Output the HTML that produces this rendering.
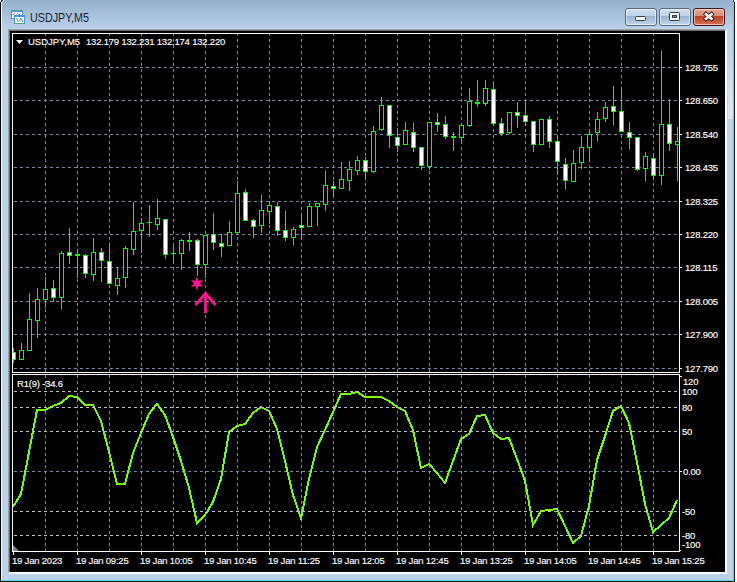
<!DOCTYPE html>
<html><head><meta charset="utf-8"><style>
html,body{margin:0;padding:0;background:#ffffff;width:737px;height:582px;overflow:hidden}
svg text{font-family:"Liberation Sans",sans-serif}
</style></head><body>
<svg width="737" height="582" viewBox="0 0 737 582" style="position:absolute;left:0;top:0">
<defs>
<linearGradient id="tg" x1="0" y1="0" x2="0" y2="1">
<stop offset="0" stop-color="#95afcc"/><stop offset="1" stop-color="#bad2ea"/></linearGradient>
<linearGradient id="bt" x1="0" y1="0" x2="0" y2="1">
<stop offset="0" stop-color="#d3e1ef"/><stop offset="0.45" stop-color="#bcd0e6"/><stop offset="0.46" stop-color="#97b3d0"/><stop offset="1" stop-color="#c3d7ec"/></linearGradient>
<linearGradient id="ct" x1="0" y1="0" x2="0" y2="1">
<stop offset="0" stop-color="#e8a898"/><stop offset="0.45" stop-color="#dc8a74"/><stop offset="0.46" stop-color="#c03f22"/><stop offset="1" stop-color="#d8765c"/></linearGradient>
<linearGradient id="hl" x1="0" y1="0" x2="0" y2="1"><stop offset="0" stop-color="#ffffff" stop-opacity="0"/><stop offset="1" stop-color="#ffffff" stop-opacity="0.5"/></linearGradient>
<clipPath id="mainclip"><rect x="13" y="34" width="666" height="338"/></clipPath>
<clipPath id="indclip"><rect x="13" y="375" width="666" height="176"/></clipPath>
</defs>
<g shape-rendering="crispEdges">
<rect x="0" y="0" width="735" height="582" fill="#bad2ea"/>
<rect x="0" y="0" width="735" height="29" fill="url(#tg)"/>
<rect x="0" y="0" width="1" height="582" fill="#000000"/>
<rect x="1" y="0" width="1" height="581" fill="#f8fbff"/>
<rect x="734" y="0" width="1" height="582" fill="#1a1a1a"/>
<rect x="733" y="0" width="1" height="581" fill="#48d6fa"/>
<rect x="0" y="581" width="735" height="1" fill="#1a1a1a"/>
<rect x="1" y="580" width="733" height="1" fill="#48d6fa"/>
<rect x="0" y="0" width="1" height="2" fill="#e8eef4"/>
<rect x="1" y="0" width="1" height="2" fill="#202020"/>
<rect x="2" y="0" width="1" height="1" fill="#303030"/>
<rect x="3" y="0" width="1" height="1" fill="#f0f4f8"/>
<rect x="2" y="1" width="1" height="1" fill="#f0f4f8"/>
<rect x="734" y="0" width="1" height="2" fill="#e8eef4"/>
<rect x="733" y="0" width="1" height="2" fill="#103030"/>
<rect x="732" y="0" width="1" height="1" fill="#c8f0ff"/>
<rect x="8" y="29" width="719" height="545" fill="#ffffff"/>
<rect x="8" y="29" width="718" height="1" fill="#a0a0a0"/>
<rect x="8" y="29" width="1" height="544" fill="#a0a0a0"/>
<rect x="9" y="30" width="716" height="1" fill="#696969"/>
<rect x="9" y="30" width="1" height="542" fill="#696969"/>
<rect x="10" y="31" width="715" height="541" fill="#000000"/>
<rect x="728" y="45" width="5" height="74" fill="url(#hl)"/>
<rect x="12" y="33" width="668" height="1" fill="#ffffff"/>
<rect x="12" y="372" width="668" height="1" fill="#ffffff"/>
<rect x="12" y="33" width="1" height="340" fill="#ffffff"/>
<rect x="679" y="33" width="1" height="340" fill="#ffffff"/>
<rect x="12" y="374" width="668" height="1" fill="#ffffff"/>
<rect x="12" y="551" width="668" height="1" fill="#ffffff"/>
<rect x="12" y="374" width="1" height="178" fill="#ffffff"/>
<rect x="679" y="374" width="1" height="178" fill="#ffffff"/>
<path d="M13,67.5H679M13,100.5H679M13,134.5H679M13,167.5H679M13,201.5H679M13,234.5H679M13,267.5H679M13,301.5H679M13,334.5H679M13,368.5H679M13,471.5H679" stroke="#778899" stroke-width="1" stroke-dasharray="3 3" stroke-dashoffset="5" fill="none"/>
<path d="M45.5,34V372M77.5,34V372M109.5,34V372M141.5,34V372M173.5,34V372M205.5,34V372M237.5,34V372M269.5,34V372M301.5,34V372M333.5,34V372M365.5,34V372M397.5,34V372M429.5,34V372M461.5,34V372M493.5,34V372M525.5,34V372M557.5,34V372M589.5,34V372M621.5,34V372M653.5,34V372" stroke="#778899" stroke-width="1" stroke-dasharray="3 3" stroke-dashoffset="1" fill="none"/>
<path d="M45.5,375V551M77.5,375V551M109.5,375V551M141.5,375V551M173.5,375V551M205.5,375V551M237.5,375V551M269.5,375V551M301.5,375V551M333.5,375V551M365.5,375V551M397.5,375V551M429.5,375V551M461.5,375V551M493.5,375V551M525.5,375V551M557.5,375V551M589.5,375V551M621.5,375V551M653.5,375V551" stroke="#778899" stroke-width="1" stroke-dasharray="3 3" stroke-dashoffset="0" fill="none"/>
<rect x="680" y="67" width="2" height="1" fill="#ffffff"/>
<rect x="680" y="100" width="2" height="1" fill="#ffffff"/>
<rect x="680" y="134" width="2" height="1" fill="#ffffff"/>
<rect x="680" y="167" width="2" height="1" fill="#ffffff"/>
<rect x="680" y="201" width="2" height="1" fill="#ffffff"/>
<rect x="680" y="234" width="2" height="1" fill="#ffffff"/>
<rect x="680" y="267" width="2" height="1" fill="#ffffff"/>
<rect x="680" y="301" width="2" height="1" fill="#ffffff"/>
<rect x="680" y="334" width="2" height="1" fill="#ffffff"/>
<rect x="680" y="368" width="2" height="1" fill="#ffffff"/>
<rect x="680" y="376" width="2" height="1" fill="#ffffff"/>
<rect x="680" y="471" width="2" height="1" fill="#ffffff"/>
<rect x="680" y="550" width="1" height="1" fill="#ffffff"/>
<rect x="13" y="552" width="1" height="3" fill="#ffffff"/>
<rect x="77" y="552" width="1" height="3" fill="#ffffff"/>
<rect x="141" y="552" width="1" height="3" fill="#ffffff"/>
<rect x="205" y="552" width="1" height="3" fill="#ffffff"/>
<rect x="269" y="552" width="1" height="3" fill="#ffffff"/>
<rect x="333" y="552" width="1" height="3" fill="#ffffff"/>
<rect x="397" y="552" width="1" height="3" fill="#ffffff"/>
<rect x="461" y="552" width="1" height="3" fill="#ffffff"/>
<rect x="525" y="552" width="1" height="3" fill="#ffffff"/>
<rect x="589" y="552" width="1" height="3" fill="#ffffff"/>
<rect x="653" y="552" width="1" height="3" fill="#ffffff"/>
<g clip-path="url(#mainclip)"><rect x="13" y="348" width="1" height="15" fill="#00ff00"/><rect x="11" y="352" width="5" height="8" fill="#00ff00"/><rect x="12" y="353" width="3" height="6" fill="#ffffff"/><rect x="21" y="343" width="1" height="17" fill="#00ff00"/><rect x="19" y="350" width="5" height="10" fill="#00ff00"/><rect x="20" y="351" width="3" height="8" fill="#000000"/><rect x="29" y="293" width="1" height="58" fill="#00ff00"/><rect x="27" y="319" width="5" height="32" fill="#00ff00"/><rect x="28" y="320" width="3" height="30" fill="#000000"/><rect x="37" y="288" width="1" height="50" fill="#00ff00"/><rect x="35" y="299" width="5" height="22" fill="#00ff00"/><rect x="36" y="300" width="3" height="20" fill="#000000"/><rect x="45" y="277" width="1" height="31" fill="#00ff00"/><rect x="43" y="289" width="5" height="11" fill="#00ff00"/><rect x="44" y="290" width="3" height="9" fill="#000000"/><rect x="53" y="280" width="1" height="22" fill="#00ff00"/><rect x="51" y="288" width="5" height="10" fill="#00ff00"/><rect x="52" y="289" width="3" height="8" fill="#ffffff"/><rect x="61" y="251" width="1" height="58" fill="#00ff00"/><rect x="59" y="253" width="5" height="45" fill="#00ff00"/><rect x="60" y="254" width="3" height="43" fill="#000000"/><rect x="69" y="228" width="1" height="36" fill="#00ff00"/><rect x="67" y="252" width="5" height="4" fill="#00ff00"/><rect x="68" y="253" width="3" height="2" fill="#ffffff"/><rect x="77" y="249" width="1" height="29" fill="#00ff00"/><rect x="75" y="254" width="5" height="2" fill="#00ff00"/><rect x="85" y="254" width="1" height="24" fill="#00ff00"/><rect x="83" y="255" width="5" height="19" fill="#00ff00"/><rect x="84" y="256" width="3" height="17" fill="#ffffff"/><rect x="93" y="238" width="1" height="43" fill="#00ff00"/><rect x="91" y="252" width="5" height="23" fill="#00ff00"/><rect x="92" y="253" width="3" height="21" fill="#000000"/><rect x="101" y="248" width="1" height="34" fill="#00ff00"/><rect x="99" y="252" width="5" height="9" fill="#00ff00"/><rect x="100" y="253" width="3" height="7" fill="#ffffff"/><rect x="109" y="243" width="1" height="41" fill="#00ff00"/><rect x="107" y="261" width="5" height="23" fill="#00ff00"/><rect x="108" y="262" width="3" height="21" fill="#ffffff"/><rect x="117" y="267" width="1" height="28" fill="#00ff00"/><rect x="115" y="278" width="5" height="8" fill="#00ff00"/><rect x="116" y="279" width="3" height="6" fill="#000000"/><rect x="125" y="246" width="1" height="42" fill="#00ff00"/><rect x="123" y="248" width="5" height="30" fill="#00ff00"/><rect x="124" y="249" width="3" height="28" fill="#000000"/><rect x="133" y="202" width="1" height="53" fill="#00ff00"/><rect x="131" y="231" width="5" height="19" fill="#00ff00"/><rect x="132" y="232" width="3" height="17" fill="#000000"/><rect x="141" y="218" width="1" height="35" fill="#00ff00"/><rect x="139" y="223" width="5" height="8" fill="#00ff00"/><rect x="140" y="224" width="3" height="6" fill="#000000"/><rect x="149" y="205" width="1" height="32" fill="#00ff00"/><rect x="147" y="222" width="5" height="1" fill="#00ff00"/><rect x="157" y="199" width="1" height="31" fill="#00ff00"/><rect x="155" y="218" width="5" height="7" fill="#00ff00"/><rect x="156" y="219" width="3" height="5" fill="#000000"/><rect x="165" y="219" width="1" height="40" fill="#00ff00"/><rect x="163" y="219" width="5" height="36" fill="#00ff00"/><rect x="164" y="220" width="3" height="34" fill="#ffffff"/><rect x="173" y="246" width="1" height="16" fill="#00ff00"/><rect x="171" y="253" width="5" height="1" fill="#00ff00"/><rect x="181" y="239" width="1" height="31" fill="#00ff00"/><rect x="179" y="240" width="5" height="14" fill="#00ff00"/><rect x="180" y="241" width="3" height="12" fill="#000000"/><rect x="189" y="232" width="1" height="19" fill="#00ff00"/><rect x="187" y="240" width="5" height="2" fill="#00ff00"/><rect x="197" y="239" width="1" height="37" fill="#00ff00"/><rect x="195" y="240" width="5" height="25" fill="#00ff00"/><rect x="196" y="241" width="3" height="23" fill="#ffffff"/><rect x="205" y="235" width="1" height="43" fill="#00ff00"/><rect x="203" y="235" width="5" height="30" fill="#00ff00"/><rect x="204" y="236" width="3" height="28" fill="#000000"/><rect x="213" y="213" width="1" height="37" fill="#00ff00"/><rect x="211" y="234" width="5" height="9" fill="#00ff00"/><rect x="212" y="235" width="3" height="7" fill="#ffffff"/><rect x="221" y="234" width="1" height="23" fill="#00ff00"/><rect x="219" y="243" width="5" height="4" fill="#00ff00"/><rect x="220" y="244" width="3" height="2" fill="#ffffff"/><rect x="229" y="221" width="1" height="25" fill="#00ff00"/><rect x="227" y="232" width="5" height="14" fill="#00ff00"/><rect x="228" y="233" width="3" height="12" fill="#000000"/><rect x="237" y="181" width="1" height="53" fill="#00ff00"/><rect x="235" y="193" width="5" height="40" fill="#00ff00"/><rect x="236" y="194" width="3" height="38" fill="#000000"/><rect x="245" y="189" width="1" height="32" fill="#00ff00"/><rect x="243" y="192" width="5" height="29" fill="#00ff00"/><rect x="244" y="193" width="3" height="27" fill="#ffffff"/><rect x="253" y="219" width="1" height="19" fill="#00ff00"/><rect x="251" y="220" width="5" height="7" fill="#00ff00"/><rect x="252" y="221" width="3" height="5" fill="#ffffff"/><rect x="261" y="195" width="1" height="38" fill="#00ff00"/><rect x="259" y="210" width="5" height="16" fill="#00ff00"/><rect x="260" y="211" width="3" height="14" fill="#000000"/><rect x="269" y="201" width="1" height="23" fill="#00ff00"/><rect x="267" y="205" width="5" height="7" fill="#00ff00"/><rect x="268" y="206" width="3" height="5" fill="#000000"/><rect x="277" y="202" width="1" height="34" fill="#00ff00"/><rect x="275" y="206" width="5" height="25" fill="#00ff00"/><rect x="276" y="207" width="3" height="23" fill="#ffffff"/><rect x="285" y="211" width="1" height="30" fill="#00ff00"/><rect x="283" y="230" width="5" height="8" fill="#00ff00"/><rect x="284" y="231" width="3" height="6" fill="#ffffff"/><rect x="293" y="227" width="1" height="18" fill="#00ff00"/><rect x="291" y="229" width="5" height="9" fill="#00ff00"/><rect x="292" y="230" width="3" height="7" fill="#000000"/><rect x="301" y="213" width="1" height="26" fill="#00ff00"/><rect x="299" y="225" width="5" height="3" fill="#00ff00"/><rect x="300" y="226" width="3" height="1" fill="#ffffff"/><rect x="309" y="203" width="1" height="24" fill="#00ff00"/><rect x="307" y="206" width="5" height="21" fill="#00ff00"/><rect x="308" y="207" width="3" height="19" fill="#000000"/><rect x="317" y="203" width="1" height="23" fill="#00ff00"/><rect x="315" y="203" width="5" height="4" fill="#00ff00"/><rect x="316" y="204" width="3" height="2" fill="#000000"/><rect x="325" y="171" width="1" height="40" fill="#00ff00"/><rect x="323" y="185" width="5" height="20" fill="#00ff00"/><rect x="324" y="186" width="3" height="18" fill="#000000"/><rect x="333" y="181" width="1" height="16" fill="#00ff00"/><rect x="331" y="186" width="5" height="3" fill="#00ff00"/><rect x="332" y="187" width="3" height="1" fill="#ffffff"/><rect x="341" y="162" width="1" height="27" fill="#00ff00"/><rect x="339" y="179" width="5" height="10" fill="#00ff00"/><rect x="340" y="180" width="3" height="8" fill="#000000"/><rect x="349" y="161" width="1" height="30" fill="#00ff00"/><rect x="347" y="169" width="5" height="12" fill="#00ff00"/><rect x="348" y="170" width="3" height="10" fill="#000000"/><rect x="357" y="156" width="1" height="19" fill="#00ff00"/><rect x="355" y="160" width="5" height="11" fill="#00ff00"/><rect x="356" y="161" width="3" height="9" fill="#000000"/><rect x="365" y="157" width="1" height="23" fill="#00ff00"/><rect x="363" y="160" width="5" height="12" fill="#00ff00"/><rect x="364" y="161" width="3" height="10" fill="#ffffff"/><rect x="373" y="126" width="1" height="47" fill="#00ff00"/><rect x="371" y="131" width="5" height="41" fill="#00ff00"/><rect x="372" y="132" width="3" height="39" fill="#000000"/><rect x="381" y="97" width="1" height="34" fill="#00ff00"/><rect x="379" y="105" width="5" height="25" fill="#00ff00"/><rect x="380" y="106" width="3" height="23" fill="#000000"/><rect x="389" y="105" width="1" height="43" fill="#00ff00"/><rect x="387" y="105" width="5" height="31" fill="#00ff00"/><rect x="388" y="106" width="3" height="29" fill="#ffffff"/><rect x="397" y="128" width="1" height="24" fill="#00ff00"/><rect x="395" y="137" width="5" height="9" fill="#00ff00"/><rect x="396" y="138" width="3" height="7" fill="#ffffff"/><rect x="405" y="122" width="1" height="23" fill="#00ff00"/><rect x="403" y="130" width="5" height="15" fill="#00ff00"/><rect x="404" y="131" width="3" height="13" fill="#000000"/><rect x="413" y="123" width="1" height="29" fill="#00ff00"/><rect x="411" y="132" width="5" height="16" fill="#00ff00"/><rect x="412" y="133" width="3" height="14" fill="#ffffff"/><rect x="421" y="147" width="1" height="23" fill="#00ff00"/><rect x="419" y="147" width="5" height="19" fill="#00ff00"/><rect x="420" y="148" width="3" height="17" fill="#ffffff"/><rect x="429" y="122" width="1" height="48" fill="#00ff00"/><rect x="427" y="122" width="5" height="45" fill="#00ff00"/><rect x="428" y="123" width="3" height="43" fill="#000000"/><rect x="437" y="113" width="1" height="19" fill="#00ff00"/><rect x="435" y="122" width="5" height="3" fill="#00ff00"/><rect x="436" y="123" width="3" height="1" fill="#ffffff"/><rect x="445" y="116" width="1" height="23" fill="#00ff00"/><rect x="443" y="124" width="5" height="13" fill="#00ff00"/><rect x="444" y="125" width="3" height="11" fill="#ffffff"/><rect x="453" y="132" width="1" height="19" fill="#00ff00"/><rect x="451" y="136" width="5" height="2" fill="#00ff00"/><rect x="461" y="124" width="1" height="17" fill="#00ff00"/><rect x="459" y="125" width="5" height="13" fill="#00ff00"/><rect x="460" y="126" width="3" height="11" fill="#000000"/><rect x="469" y="88" width="1" height="39" fill="#00ff00"/><rect x="467" y="101" width="5" height="25" fill="#00ff00"/><rect x="468" y="102" width="3" height="23" fill="#000000"/><rect x="477" y="80" width="1" height="27" fill="#00ff00"/><rect x="475" y="102" width="5" height="2" fill="#00ff00"/><rect x="485" y="80" width="1" height="26" fill="#00ff00"/><rect x="483" y="88" width="5" height="16" fill="#00ff00"/><rect x="484" y="89" width="3" height="14" fill="#000000"/><rect x="493" y="83" width="1" height="43" fill="#00ff00"/><rect x="491" y="89" width="5" height="35" fill="#00ff00"/><rect x="492" y="90" width="3" height="33" fill="#ffffff"/><rect x="501" y="118" width="1" height="18" fill="#00ff00"/><rect x="499" y="123" width="5" height="11" fill="#00ff00"/><rect x="500" y="124" width="3" height="9" fill="#ffffff"/><rect x="509" y="112" width="1" height="22" fill="#00ff00"/><rect x="507" y="112" width="5" height="21" fill="#00ff00"/><rect x="508" y="113" width="3" height="19" fill="#000000"/><rect x="517" y="102" width="1" height="26" fill="#00ff00"/><rect x="515" y="112" width="5" height="4" fill="#00ff00"/><rect x="516" y="113" width="3" height="2" fill="#ffffff"/><rect x="525" y="100" width="1" height="26" fill="#00ff00"/><rect x="523" y="115" width="5" height="7" fill="#00ff00"/><rect x="524" y="116" width="3" height="5" fill="#ffffff"/><rect x="533" y="121" width="1" height="31" fill="#00ff00"/><rect x="531" y="121" width="5" height="24" fill="#00ff00"/><rect x="532" y="122" width="3" height="22" fill="#ffffff"/><rect x="541" y="119" width="1" height="26" fill="#00ff00"/><rect x="539" y="119" width="5" height="26" fill="#00ff00"/><rect x="540" y="120" width="3" height="24" fill="#000000"/><rect x="549" y="116" width="1" height="32" fill="#00ff00"/><rect x="547" y="119" width="5" height="23" fill="#00ff00"/><rect x="548" y="120" width="3" height="21" fill="#ffffff"/><rect x="557" y="137" width="1" height="38" fill="#00ff00"/><rect x="555" y="141" width="5" height="21" fill="#00ff00"/><rect x="556" y="142" width="3" height="19" fill="#ffffff"/><rect x="565" y="158" width="1" height="31" fill="#00ff00"/><rect x="563" y="164" width="5" height="17" fill="#00ff00"/><rect x="564" y="165" width="3" height="15" fill="#ffffff"/><rect x="573" y="150" width="1" height="32" fill="#00ff00"/><rect x="571" y="163" width="5" height="19" fill="#00ff00"/><rect x="572" y="164" width="3" height="17" fill="#000000"/><rect x="581" y="136" width="1" height="33" fill="#00ff00"/><rect x="579" y="147" width="5" height="16" fill="#00ff00"/><rect x="580" y="148" width="3" height="14" fill="#000000"/><rect x="589" y="132" width="1" height="30" fill="#00ff00"/><rect x="587" y="134" width="5" height="14" fill="#00ff00"/><rect x="588" y="135" width="3" height="12" fill="#000000"/><rect x="597" y="112" width="1" height="29" fill="#00ff00"/><rect x="595" y="119" width="5" height="14" fill="#00ff00"/><rect x="596" y="120" width="3" height="12" fill="#000000"/><rect x="605" y="102" width="1" height="20" fill="#00ff00"/><rect x="603" y="107" width="5" height="12" fill="#00ff00"/><rect x="604" y="108" width="3" height="10" fill="#000000"/><rect x="613" y="86" width="1" height="39" fill="#00ff00"/><rect x="611" y="106" width="5" height="6" fill="#00ff00"/><rect x="612" y="107" width="3" height="4" fill="#ffffff"/><rect x="621" y="88" width="1" height="44" fill="#00ff00"/><rect x="619" y="111" width="5" height="21" fill="#00ff00"/><rect x="620" y="112" width="3" height="19" fill="#ffffff"/><rect x="629" y="122" width="1" height="27" fill="#00ff00"/><rect x="627" y="132" width="5" height="6" fill="#00ff00"/><rect x="628" y="133" width="3" height="4" fill="#ffffff"/><rect x="637" y="137" width="1" height="34" fill="#00ff00"/><rect x="635" y="137" width="5" height="33" fill="#00ff00"/><rect x="636" y="138" width="3" height="31" fill="#ffffff"/><rect x="645" y="152" width="1" height="29" fill="#00ff00"/><rect x="643" y="156" width="5" height="13" fill="#00ff00"/><rect x="644" y="157" width="3" height="11" fill="#000000"/><rect x="653" y="153" width="1" height="27" fill="#00ff00"/><rect x="651" y="158" width="5" height="18" fill="#00ff00"/><rect x="652" y="159" width="3" height="16" fill="#ffffff"/><rect x="661" y="51" width="1" height="134" fill="#00ff00"/><rect x="659" y="124" width="5" height="52" fill="#00ff00"/><rect x="660" y="125" width="3" height="50" fill="#000000"/><rect x="669" y="99" width="1" height="52" fill="#00ff00"/><rect x="667" y="124" width="5" height="20" fill="#00ff00"/><rect x="668" y="125" width="3" height="18" fill="#ffffff"/><rect x="677" y="127" width="1" height="54" fill="#00ff00"/><rect x="675" y="141" width="5" height="4" fill="#00ff00"/><rect x="676" y="142" width="3" height="2" fill="#000000"/></g>
</g>
<g clip-path="url(#indclip)"><polyline points="13,507 21,494 29,452 37,410 45,410 53,406 61,403 69,396 77,397 85,405 93,405 101,421 109,452 117,484 125,484 133,453 141,433 149,414 157,404 165,415 173,437 181,461 189,488 197,523 205,515 213,502 221,479 229,432 237,426 245,424 253,413 261,407 269,411 277,429 285,461 293,495 301,518 309,479 317,447 325,430 333,412 341,394 349,394 357,392 365,397 373,397 381,397 389,401 397,407 405,411 413,430 421,468 429,464 437,473 445,483 453,461 461,439 469,434 477,416 485,415 493,433 501,439 509,438 517,459 525,481 533,525 541,511 549,510 557,509 565,526 573,543 581,536 589,506 597,460 605,436 613,411 621,406 629,423 637,462 645,504 653,532 661,525 669,518 677,500" fill="none" stroke="#7cfc00" stroke-width="2" stroke-linejoin="miter" shape-rendering="crispEdges"/></g>
<path d="M13,391.5H679M13,407.5H679M13,431.5H679M13,511.5H679M13,535.5H679" stroke="#c0c0c0" stroke-width="1" stroke-dasharray="3 3" stroke-dashoffset="5" fill="none" shape-rendering="crispEdges"/>
<polygon points="13,545 13,551 19,551" fill="#778899"/>
<polygon points="197.00,276.40 198.50,280.80 203.06,279.90 200.00,283.40 203.06,286.90 198.50,286.00 197.00,290.40 195.50,286.00 190.94,286.90 194.00,283.40 190.94,279.90 195.50,280.80" fill="#ff1493"/>
<path d="M205.5,313 L205.5,294 M195.5,305 L205.5,293.3 L215.5,305" fill="none" stroke="#ff1493" stroke-width="2.8"/>
<rect x="625.5" y="8.5" width="31" height="17" rx="2.5" ry="2.5" fill="url(#bt)" stroke="#5a687c" stroke-width="1"/><rect x="626.5" y="9.5" width="29" height="15" rx="2" ry="2" fill="none" stroke="rgba(255,255,255,0.55)" stroke-width="1"/>
<rect x="659.5" y="8.5" width="31" height="17" rx="2.5" ry="2.5" fill="url(#bt)" stroke="#5a687c" stroke-width="1"/><rect x="660.5" y="9.5" width="29" height="15" rx="2" ry="2" fill="none" stroke="rgba(255,255,255,0.55)" stroke-width="1"/>
<rect x="693.5" y="8.5" width="31" height="17" rx="2.5" ry="2.5" fill="url(#ct)" stroke="#4a1018" stroke-width="1"/><rect x="694.5" y="9.5" width="29" height="15" rx="2" ry="2" fill="none" stroke="rgba(255,255,255,0.55)" stroke-width="1"/>
<rect x="635.5" y="16.5" width="10" height="4" rx="1" fill="#f4f4f4" stroke="#333a48" stroke-width="1"/>
<rect x="669.5" y="12.5" width="10" height="8" rx="1" fill="#f4f4f4" stroke="#333a48" stroke-width="1"/>
<rect x="672.5" y="15.5" width="4" height="2" fill="#6a88aa" stroke="#333a48" stroke-width="1"/>
<path d="M704.3,12.8 L713.2,20.2 M713.2,12.8 L704.3,20.2" stroke="#3b2a30" stroke-width="4.4" stroke-linecap="butt"/>
<path d="M705,13.4 L712.5,19.6 M712.5,13.4 L705,19.6" stroke="#f4f4f4" stroke-width="2.6" stroke-linecap="butt"/>
<g shape-rendering="crispEdges">
<rect x="11" y="10" width="12" height="9" fill="#4f8ff7"/>
<rect x="12" y="12" width="10" height="6" fill="#ffffff"/>
<rect x="14" y="15" width="11" height="9" fill="#4f8ff7"/>
<rect x="15" y="17" width="9" height="6" fill="#ffffff"/>
<rect x="13" y="14" width="1" height="1" fill="#4f8ff7"/>
<rect x="14" y="13" width="1" height="1" fill="#4f8ff7"/>
<rect x="17" y="13" width="1" height="1" fill="#4f8ff7"/>
<rect x="18" y="14" width="1" height="1" fill="#4f8ff7"/>
<rect x="19" y="14" width="1" height="1" fill="#4f8ff7"/>
<rect x="20" y="15" width="1" height="1" fill="#4f8ff7"/>
<rect x="16" y="18" width="1" height="1" fill="#4f8ff7"/>
<rect x="17" y="19" width="1" height="1" fill="#4f8ff7"/>
<rect x="17" y="20" width="1" height="1" fill="#4f8ff7"/>
<rect x="18" y="21" width="1" height="1" fill="#4f8ff7"/>
<rect x="19" y="20" width="1" height="1" fill="#4f8ff7"/>
<rect x="20" y="19" width="1" height="1" fill="#4f8ff7"/>
<rect x="20" y="18" width="1" height="1" fill="#4f8ff7"/>
<rect x="21" y="19" width="1" height="1" fill="#4f8ff7"/>
<rect x="22" y="20" width="1" height="1" fill="#4f8ff7"/>
<rect x="22" y="21" width="1" height="1" fill="#4f8ff7"/>
<rect x="12" y="10" width="1" height="1" fill="#4a9a88"/>
<rect x="14" y="10" width="1" height="1" fill="#4a9a88"/>
<rect x="16" y="10" width="1" height="1" fill="#4a9a88"/>
<rect x="18" y="10" width="1" height="1" fill="#4a9a88"/>
<rect x="20" y="10" width="1" height="1" fill="#4a9a88"/>
<rect x="22" y="10" width="1" height="1" fill="#4a9a88"/>
<rect x="11" y="12" width="1" height="1" fill="#4a9a88"/>
<rect x="11" y="14" width="1" height="1" fill="#4a9a88"/>
<rect x="11" y="16" width="1" height="1" fill="#4a9a88"/>
<rect x="11" y="18" width="1" height="1" fill="#4a9a88"/>
<rect x="13" y="18" width="1" height="1" fill="#4a9a88"/>
<rect x="22" y="12" width="1" height="1" fill="#4a9a88"/>
<rect x="22" y="14" width="1" height="1" fill="#4a9a88"/>
<rect x="15" y="15" width="1" height="1" fill="#4a9a88"/>
<rect x="17" y="15" width="1" height="1" fill="#4a9a88"/>
<rect x="19" y="15" width="1" height="1" fill="#4a9a88"/>
<rect x="21" y="15" width="1" height="1" fill="#4a9a88"/>
<rect x="23" y="15" width="1" height="1" fill="#4a9a88"/>
<rect x="14" y="17" width="1" height="1" fill="#4a9a88"/>
<rect x="14" y="19" width="1" height="1" fill="#4a9a88"/>
<rect x="14" y="21" width="1" height="1" fill="#4a9a88"/>
<rect x="14" y="23" width="1" height="1" fill="#4a9a88"/>
<rect x="16" y="23" width="1" height="1" fill="#4a9a88"/>
<rect x="18" y="23" width="1" height="1" fill="#4a9a88"/>
<rect x="20" y="23" width="1" height="1" fill="#4a9a88"/>
<rect x="22" y="23" width="1" height="1" fill="#4a9a88"/>
<rect x="24" y="17" width="1" height="1" fill="#4a9a88"/>
<rect x="24" y="19" width="1" height="1" fill="#4a9a88"/>
<rect x="24" y="21" width="1" height="1" fill="#4a9a88"/>
<rect x="24" y="23" width="1" height="1" fill="#4a9a88"/>
</g>
<polygon points="16,40 23,40 19.5,44" fill="#ffffff"/>
<g font-family="Liberation Sans, sans-serif" stroke-width="0.15"><text x="30" y="22" font-size="12.5" fill="#1e1e2a" stroke="#1e1e2a" text-anchor="start" letter-spacing="0" textLength="59" lengthAdjust="spacingAndGlyphs" stroke-width="0">USDJPY,M5</text><text x="28" y="45" font-size="9.5" fill="#ffffff" stroke="#ffffff" text-anchor="start" letter-spacing="0" >USDJPY,M5</text><text x="86" y="45" font-size="9.5" fill="#ffffff" stroke="#ffffff" text-anchor="start" letter-spacing="-0.2" >132.179 132.231 132.174 132.220</text><text x="685" y="71" font-size="9.5" fill="#ffffff" stroke="#ffffff" text-anchor="start" letter-spacing="-0.2" >128.755</text><text x="685" y="104" font-size="9.5" fill="#ffffff" stroke="#ffffff" text-anchor="start" letter-spacing="-0.2" >128.650</text><text x="685" y="138" font-size="9.5" fill="#ffffff" stroke="#ffffff" text-anchor="start" letter-spacing="-0.2" >128.540</text><text x="685" y="171" font-size="9.5" fill="#ffffff" stroke="#ffffff" text-anchor="start" letter-spacing="-0.2" >128.435</text><text x="685" y="205" font-size="9.5" fill="#ffffff" stroke="#ffffff" text-anchor="start" letter-spacing="-0.2" >128.325</text><text x="685" y="238" font-size="9.5" fill="#ffffff" stroke="#ffffff" text-anchor="start" letter-spacing="-0.2" >128.220</text><text x="685" y="271" font-size="9.5" fill="#ffffff" stroke="#ffffff" text-anchor="start" letter-spacing="-0.2" >128.115</text><text x="685" y="305" font-size="9.5" fill="#ffffff" stroke="#ffffff" text-anchor="start" letter-spacing="-0.2" >128.005</text><text x="685" y="338" font-size="9.5" fill="#ffffff" stroke="#ffffff" text-anchor="start" letter-spacing="-0.2" >127.900</text><text x="685" y="372" font-size="9.5" fill="#ffffff" stroke="#ffffff" text-anchor="start" letter-spacing="-0.2" >127.790</text><text x="17" y="387" font-size="9.5" fill="#ffffff" stroke="#ffffff" text-anchor="start" letter-spacing="-0.2" >R1(9) -34.6</text><text x="683" y="385" font-size="9.5" fill="#ffffff" stroke="#ffffff" text-anchor="start" letter-spacing="-0.2" >120</text><text x="682" y="395" font-size="9.5" fill="#ffffff" stroke="#ffffff" text-anchor="start" letter-spacing="-0.2" >100</text><text x="682" y="411" font-size="9.5" fill="#ffffff" stroke="#ffffff" text-anchor="start" letter-spacing="-0.2" >80</text><text x="682" y="435" font-size="9.5" fill="#ffffff" stroke="#ffffff" text-anchor="start" letter-spacing="-0.2" >50</text><text x="683" y="475" font-size="9.5" fill="#ffffff" stroke="#ffffff" text-anchor="start" letter-spacing="-0.2" >0.00</text><text x="682" y="515" font-size="9.5" fill="#ffffff" stroke="#ffffff" text-anchor="start" letter-spacing="-0.2" >-50</text><text x="682" y="539" font-size="9.5" fill="#ffffff" stroke="#ffffff" text-anchor="start" letter-spacing="-0.2" >-80</text><text x="682" y="548" font-size="9.5" fill="#ffffff" stroke="#ffffff" text-anchor="start" letter-spacing="-0.2" >-100</text><text x="12" y="564" font-size="9.5" fill="#ffffff" stroke="#ffffff" text-anchor="start" letter-spacing="-0.2" >19 Jan 2023</text><text x="76" y="564" font-size="9.5" fill="#ffffff" stroke="#ffffff" text-anchor="start" letter-spacing="-0.2" >19 Jan 09:25</text><text x="140" y="564" font-size="9.5" fill="#ffffff" stroke="#ffffff" text-anchor="start" letter-spacing="-0.2" >19 Jan 10:05</text><text x="204" y="564" font-size="9.5" fill="#ffffff" stroke="#ffffff" text-anchor="start" letter-spacing="-0.2" >19 Jan 10:45</text><text x="268" y="564" font-size="9.5" fill="#ffffff" stroke="#ffffff" text-anchor="start" letter-spacing="-0.2" >19 Jan 11:25</text><text x="332" y="564" font-size="9.5" fill="#ffffff" stroke="#ffffff" text-anchor="start" letter-spacing="-0.2" >19 Jan 12:05</text><text x="396" y="564" font-size="9.5" fill="#ffffff" stroke="#ffffff" text-anchor="start" letter-spacing="-0.2" >19 Jan 12:45</text><text x="460" y="564" font-size="9.5" fill="#ffffff" stroke="#ffffff" text-anchor="start" letter-spacing="-0.2" >19 Jan 13:25</text><text x="524" y="564" font-size="9.5" fill="#ffffff" stroke="#ffffff" text-anchor="start" letter-spacing="-0.2" >19 Jan 14:05</text><text x="588" y="564" font-size="9.5" fill="#ffffff" stroke="#ffffff" text-anchor="start" letter-spacing="-0.2" >19 Jan 14:45</text><text x="652" y="564" font-size="9.5" fill="#ffffff" stroke="#ffffff" text-anchor="start" letter-spacing="-0.2" >19 Jan 15:25</text></g>
</svg>
</body></html>
